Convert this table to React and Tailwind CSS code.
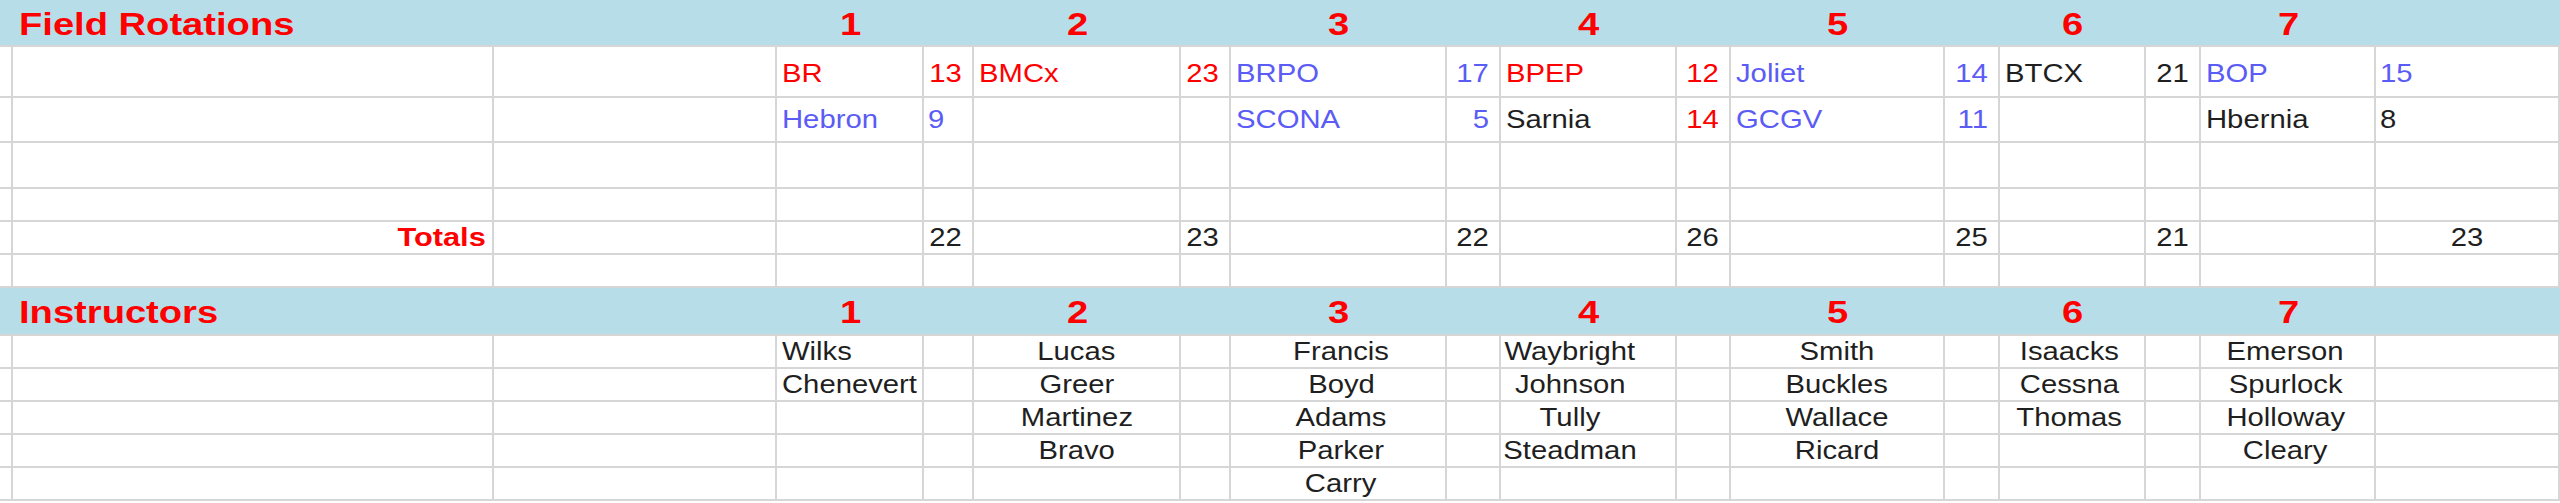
import React from "react";

const GRID =
  "grid grid-cols-[13px_481px_283px_147px_50px_207px_50px_216px_54px_176px_54px_214px_55px_146px_55px_175px_184px]";

const RED = "text-[#ff0000]";
const BLUE = "text-[#5b5bf5]";
const INK = "text-[#1f1f1f]";

// the 7th pair's number sits in the last, wide column
const fieldRows = [
  {
    h: "h-[51px] pt-[3px]",
    groups: [
      ["BR", RED, "13", RED],
      ["BMCx", RED, "23", RED],
      ["BRPO", BLUE, "17", BLUE],
      ["BPEP", RED, "12", RED],
      ["Joliet", BLUE, "14", BLUE],
      ["BTCX", INK, "21", INK],
      ["BOP", BLUE, "15", BLUE, "left"],
    ],
  },
  {
    h: "h-[45px]",
    groups: [
      ["Hebron", BLUE, "9", BLUE, "left"],
      ["", INK, "", INK],
      ["SCONA", BLUE, "5", BLUE],
      ["Sarnia", INK, "14", RED],
      ["GCGV", BLUE, "11", BLUE],
      ["", INK, "", INK],
      ["Hbernia", INK, "8", INK, "left"],
    ],
  },
];

const totals = ["22", "23", "22", "26", "25", "21"];

const instructors = [
  ["Wilks", "Chenevert"],
  ["Lucas", "Greer", "Martinez", "Bravo"],
  ["Francis", "Boyd", "Adams", "Parker", "Carry"],
  ["Waybright", "Johnson", "Tully", "Steadman"],
  ["Smith", "Buckles", "Wallace", "Ricard"],
  ["Isaacks", "Cessna", "Thomas"],
  ["Emerson", "Spurlock", "Holloway", "Cleary"],
];

const nameCellPad = [
  "pl-[5px]",
  "justify-center",
  "justify-center pl-[6px]",
  "justify-center pr-[36px]",
  "justify-center",
  "justify-center pr-[6px]",
  "justify-center pr-[4px]",
];

// text in the sheet is drawn a little wide, so stretch it from the aligned edge
const Txt = ({ children, align = "left", bold = false, color = INK }) => {
  const origin =
    align === "right" ? "origin-right" : align === "center" ? "origin-center" : "origin-left";
  return (
    <span
      className={`inline-block whitespace-nowrap ${origin} ${
        bold ? "font-bold scale-x-[1.23]" : "scale-x-[1.17]"
      } ${color}`}
    >
      {children}
    </span>
  );
};

const Cell = ({ children, className = "" }) => (
  <div className={`flex items-center border-r-2 border-b-2 border-[#d6d6d6] ${className}`}>
    {children}
  </div>
);

const Header = ({ title, h }) => (
  <div className={`${GRID} ${h} bg-[#b7dde8] border-b-2 border-[#d6d6d6] text-[31px]`}>
    <div className="col-span-3 flex items-center pl-[19px] pt-[3px]">
      <Txt bold color={RED}>
        {title}
      </Txt>
    </div>
    {[1, 2, 3, 4, 5, 6, 7].map((n) => (
      <React.Fragment key={n}>
        <div className="flex items-center justify-center pt-[3px]">
          <Txt bold align="center" color={RED}>
            {n}
          </Txt>
        </div>
        {n < 7 && <div />}
      </React.Fragment>
    ))}
    <div />
  </div>
);

const Lead = () => (
  <>
    <Cell />
    <Cell />
    <Cell />
  </>
);

const EmptyRow = ({ h }) => (
  <div className={`${GRID} ${h}`}>
    {Array.from({ length: 17 }).map((_, i) => (
      <Cell key={i} />
    ))}
  </div>
);

export default function App() {
  return (
    <div className="w-[2560px] h-[503px] overflow-hidden bg-white text-[25px] leading-none font-['Liberation_Sans',Arial,sans-serif]">
      <Header title="Field Rotations" h="h-[47px]" />

      {fieldRows.map((row, r) => (
        <div key={r} className={`${GRID} ${row.h.split(" ")[0]}`}>
          <Lead />
          {row.groups.map(([name, nc, num, numc, numAlign], i) => (
            <React.Fragment key={i}>
              <Cell className={`pl-[5px] ${r === 0 ? "pt-[4px]" : ""}`}>
                <Txt color={nc}>{name}</Txt>
              </Cell>
              {numAlign === "left" ? (
                <Cell className={`pl-[4px] ${r === 0 ? "pt-[4px]" : ""}`}>
                  <Txt color={numc}>{num}</Txt>
                </Cell>
              ) : (
                <Cell className={`justify-end pr-[10px] ${r === 0 ? "pt-[4px]" : ""}`}>
                  <Txt align="right" color={numc}>
                    {num}
                  </Txt>
                </Cell>
              )}
            </React.Fragment>
          ))}
        </div>
      ))}

      <EmptyRow h="h-[46px]" />
      <EmptyRow h="h-[33px]" />

      <div className={`${GRID} h-[33px]`}>
        <Cell />
        <Cell className="justify-end pr-[6px]">
          <Txt bold align="right" color={RED}>
            Totals
          </Txt>
        </Cell>
        <Cell />
        {totals.map((t, i) => (
          <React.Fragment key={i}>
            <Cell />
            <Cell className="justify-end pr-[10px]">
              <Txt align="right">{t}</Txt>
            </Cell>
          </React.Fragment>
        ))}
        <Cell />
        <Cell className="justify-center">
          <Txt align="center">23</Txt>
        </Cell>
      </div>

      <EmptyRow h="h-[33px]" />

      <Header title="Instructors" h="h-[48px]" />

      {[0, 1, 2, 3, 4].map((r) => (
        <div key={r} className={`${GRID} h-[33px]`}>
          <Lead />
          {instructors.map((names, g) => (
            <React.Fragment key={g}>
              <Cell className={nameCellPad[g]}>
                {names[r] && <Txt align={g === 0 ? "left" : "center"}>{names[r]}</Txt>}
              </Cell>
              <Cell />
            </React.Fragment>
          ))}
        </div>
      ))}
    </div>
  );
}
